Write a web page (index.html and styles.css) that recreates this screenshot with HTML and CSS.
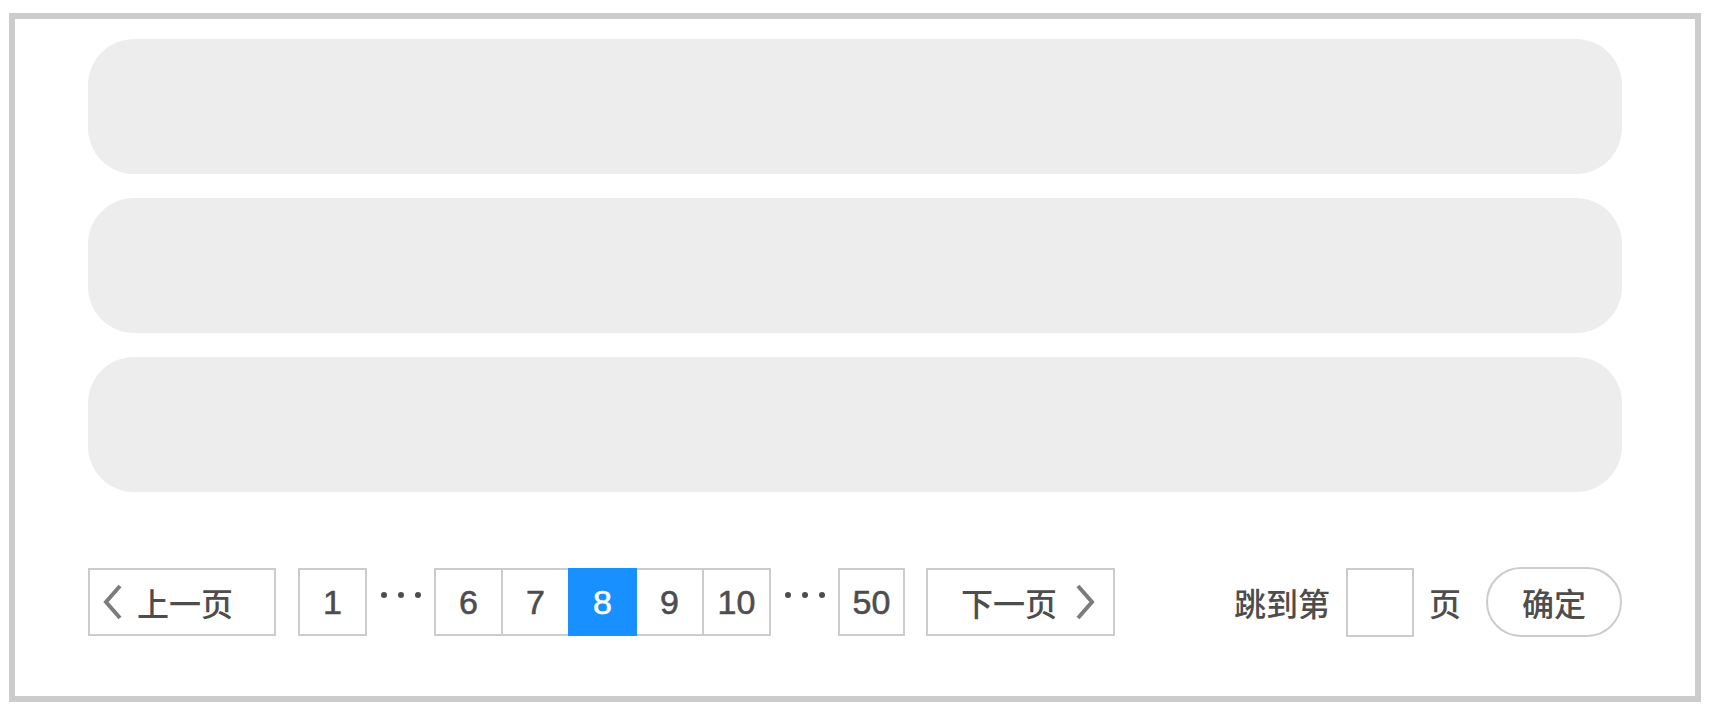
FILE: index.html
```html
<!DOCTYPE html>
<html lang="zh-CN">
<head>
    <meta charset="UTF-8">
    <meta name="viewport" content="width=device-width, initial-scale=1.0">
    <title>分页</title>
    <link rel="stylesheet" href="styles.css">
</head>
<body>
    <div class="frame">
        <div class="list">
            <div class="item"></div>
            <div class="item"></div>
            <div class="item"></div>
        </div>

        <div class="pager">
            <a class="pager-btn prev" href="#">
                <svg class="arrow" width="20" height="36" viewBox="0 0 20 36"><polyline points="17,2 3,18 17,34"/></svg>
                <span>上一页</span>
            </a>
            <a class="page" href="#">1</a>
            <span class="ellipsis"><i></i><i></i><i></i></span>
            <div class="page-group">
                <a class="page" href="#">6</a>
                <a class="page" href="#">7</a>
                <a class="page active" href="#">8</a>
                <a class="page" href="#">9</a>
                <a class="page" href="#">10</a>
            </div>
            <span class="ellipsis"><i></i><i></i><i></i></span>
            <a class="page last" href="#">50</a>
            <a class="pager-btn next" href="#">
                <span>下一页</span>
                <svg class="arrow" width="20" height="36" viewBox="0 0 20 36"><polyline points="3,2 17,18 3,34"/></svg>
            </a>

            <div class="jump">
                <span>跳到第</span>
                <input type="text" class="jump-input">
                <span>页</span>
                <button class="jump-btn">确定</button>
            </div>
        </div>
    </div>
</body>
</html>
```

FILE: styles.css
```css
body {
    margin: 0;
    font-family: 'Liberation Sans', 'Noto Sans CJK SC', sans-serif;
    color: #4d4d4d;
    background: #fff;
}

.frame {
    margin: 13px 15px 0 9px;
    height: 657px;
    border: 6px solid #ccc;
    padding: 20px 73px 0 73px;
}

.list {
    display: flex;
    flex-direction: column;
    gap: 24px;
}

.item {
    height: 135px;
    background: #ededed;
    border-radius: 46px;
}

.pager {
    display: flex;
    align-items: center;
    margin-top: 75px;
    height: 70px;
}

.pager a {
    text-decoration: none;
    color: #4d4d4d;
}

.pager-btn {
    box-sizing: border-box;
    height: 68px;
    width: 188px;
    border: 2px solid #ccc;
    display: flex;
    align-items: center;
    gap: 14px;
    font-size: 32px;
    font-weight: 500;
}

.prev {
    padding-left: 13px;
}

.next {
    width: 189px;
    margin-left: 21px;
    justify-content: flex-end;
    padding-right: 18px;
    gap: 18px;
}

.arrow polyline {
    fill: none;
    stroke: #7c7c7c;
    stroke-width: 4;
}

.page {
    box-sizing: border-box;
    width: 69px;
    height: 68px;
    border: 2px solid #ccc;
    display: flex;
    align-items: center;
    justify-content: center;
    font-size: 34px;
    -webkit-text-stroke: 0.6px currentColor;
    background: #fff;
}

.prev + .page {
    margin-left: 22px;
}

.page.last {
    width: 67px;
}

.page-group {
    display: flex;
}

.page-group .page + .page {
    margin-left: -2px;
}

.page-group .active {
    background: #1890ff;
    border-color: #1890ff;
    color: #fff;
    position: relative;
}

.ellipsis {
    width: 67px;
    display: flex;
    justify-content: center;
    gap: 11px;
    padding-bottom: 14px;
}

.ellipsis i {
    width: 6px;
    height: 6px;
    border-radius: 50%;
    background: #4d4d4d;
}

.jump {
    margin-left: auto;
    display: flex;
    align-items: center;
    font-size: 32px;
    font-weight: 500;
}

.jump-input {
    box-sizing: border-box;
    width: 68px;
    height: 69px;
    border: 2px solid #ccc;
    margin: 0 15px 0 16px;
    outline: none;
}

.jump-btn {
    box-sizing: border-box;
    width: 136px;
    height: 70px;
    margin-left: 25px;
    border: 2px solid #ccc;
    border-radius: 35px;
    background: #fff;
    font-family: inherit;
    font-size: 32px;
    font-weight: 500;
    color: #4d4d4d;
    padding: 0;
}
```
